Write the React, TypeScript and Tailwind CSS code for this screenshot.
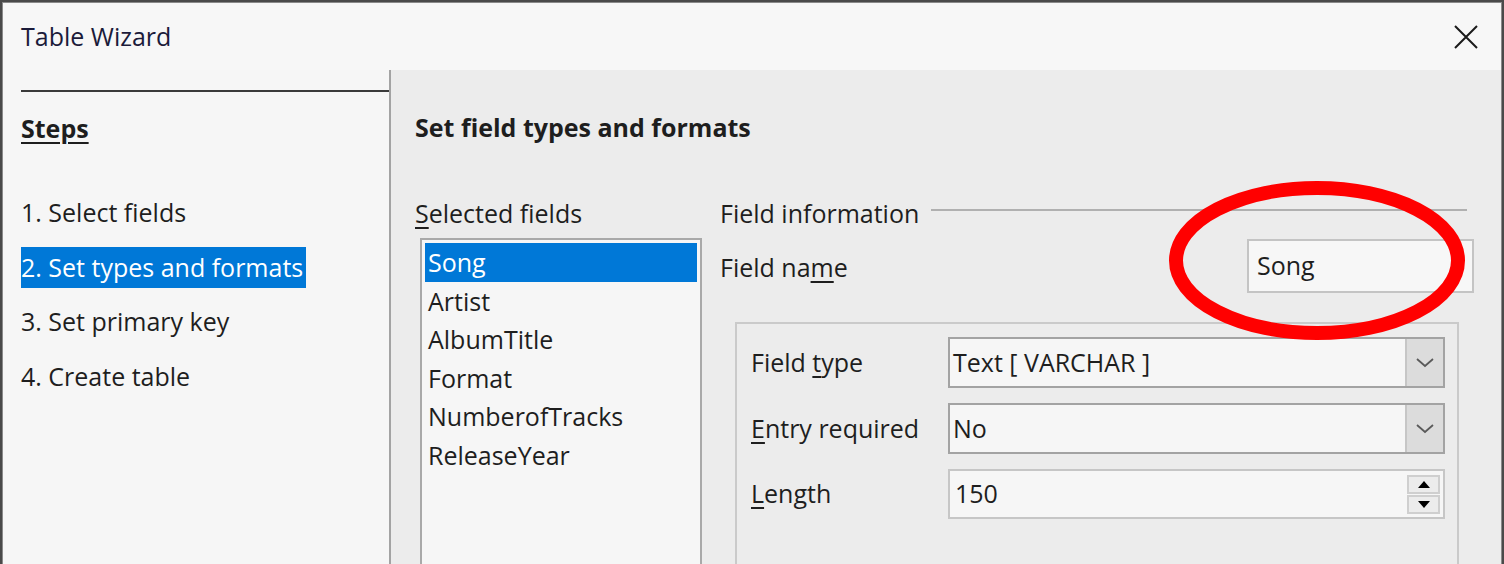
import React from "react";

const font = { fontFamily: '"Open Sans", "Noto Sans", sans-serif' };

function Chevron() {
  return (
    <svg width="18" height="10" viewBox="0 0 18 10">
      <path d="M1 1 L9 8 L17 1" fill="none" stroke="#5a5a5a" strokeWidth="1.8" />
    </svg>
  );
}

function ComboBox({ value }: { value: string }) {
  return (
    <div className="flex h-[51px] w-[497px] border-2 border-[#a3a3a3] bg-[#f6f6f6]">
      <div className="flex flex-1 items-center pl-[3px]">{value}</div>
      <div className="flex w-[38px] items-center justify-center border-l-2 border-[#c6c6c6] bg-[#dcdcdc]">
        <Chevron />
      </div>
    </div>
  );
}

function SpinBox({ value }: { value: string }) {
  return (
    <div className="flex h-[50px] w-[497px] border-2 border-[#c6c6c6] bg-[#f6f6f6]">
      <div className="flex flex-1 items-center pl-[5px]">{value}</div>
      <div className="flex flex-col justify-center gap-[1px] pr-[3px]">
        <div className="flex h-[19px] w-[33px] items-center justify-center border-2 border-[#cfcfcf] bg-[#ececec]">
          <svg width="12" height="7" viewBox="0 0 12 7">
            <path d="M0 7 L6 0 L12 7 Z" fill="#000" />
          </svg>
        </div>
        <div className="flex h-[19px] w-[33px] items-center justify-center border-2 border-[#cfcfcf] bg-[#ececec]">
          <svg width="12" height="7" viewBox="0 0 12 7">
            <path d="M0 0 L12 0 L6 7 Z" fill="#000" />
          </svg>
        </div>
      </div>
    </div>
  );
}

export default function App() {
  const steps = [
    "1. Select fields",
    "2. Set types and formats",
    "3. Set primary key",
    "4. Create table",
  ];
  const fields = ["Song", "Artist", "AlbumTitle", "Format", "NumberofTracks", "ReleaseYear"];

  return (
    <div
      className="relative h-[564px] w-[1504px] overflow-hidden bg-[#4a4a4a] pl-[2px] pt-[2px] text-[25px] text-[#1e1e1e]"
      style={font}
    >
      <div className="flex h-[600px] w-[1500px] flex-col border-x border-t border-[#8a8a8a] bg-[#f7f7f7]">
        {/* title bar */}
        <div className="flex h-[67px] shrink-0 items-center justify-between pl-[18px] pr-[23px]">
          <span className="text-[#1b1b3a]">Table Wizard</span>
          <svg width="24" height="24" viewBox="0 0 24 24">
            <path d="M1 1 L23 23 M23 1 L1 23" stroke="#1a1a1a" strokeWidth="2" />
          </svg>
        </div>

        <div className="flex flex-1">
          {/* steps panel */}
          <div className="flex w-[386px] flex-col bg-[#f6f6f6] pl-[18px]">
            <div className="mt-[20px] h-[2px] bg-[#3a3a3a]" />
            <div className="mt-[18px] h-[36px] font-bold leading-[36px]">
              <span className="underline decoration-2 underline-offset-4">Steps</span>
            </div>
            <div className="mt-[46px] flex flex-col gap-[13.6px]">
              {steps.map((s, i) => (
                <div key={s} className="h-[41px]">
                  <span
                    className={`inline-block h-[41px] leading-[41px] ${
                      i === 1 ? "bg-[#0078d7] pr-[3px] text-white" : ""
                    }`}
                  >
                    {s}
                  </span>
                </div>
              ))}
            </div>
          </div>

          <div className="w-[2px] bg-[#a3a3a3]" />

          {/* main panel */}
          <div className="flex flex-1 flex-col bg-[#ececec] pl-[24px] pt-[39px]">
            <div className="h-[36px] font-bold leading-[36px]">Set field types and formats</div>

            <div className="mt-[50px] flex">
              {/* selected fields */}
              <div className="flex w-[287px] flex-col">
                <div className="h-[36px] leading-[36px]">
                  <span className="underline underline-offset-4">S</span>elected fields
                </div>
                <div className="ml-[5px] mt-[7px] h-[400px] w-[282px] border-2 border-[#a9a9a9] bg-[#f6f6f6] p-[3px]">
                  {fields.map((f, i) => (
                    <div
                      key={f}
                      className={`h-[38.6px] pl-[3px] leading-[38px] ${
                        i === 0 ? "bg-[#0078d7] text-white" : ""
                      }`}
                    >
                      {f}
                    </div>
                  ))}
                </div>
              </div>

              {/* field information */}
              <div className="ml-[18px] flex w-[754px] flex-col">
                <div className="flex h-[36px] items-center">
                  <span className="leading-[36px]">Field information</span>
                  <div className="mb-[6px] ml-[12px] mr-[7px] h-[2px] flex-1 bg-[#b0b0b0]" />
                </div>
                <div className="mt-[8px] flex items-center">
                  <span className="pt-[3px]">
                    Field na<span className="underline underline-offset-4">m</span>e
                  </span>
                  <div className="ml-auto flex h-[54px] w-[227px] items-center border-2 border-[#c4c4c4] bg-[#f7f7f7] pl-[8px]">
                    Song
                  </div>
                </div>

                <div className="ml-[15px] mt-[29px] h-[300px] w-[724px] border-2 border-[#cacaca] pl-[14px] pt-[13px]">
                  <div className="flex flex-col gap-[15px]">
                    <div className="flex items-center">
                      <span className="w-[197px]">
                        Field <span className="underline underline-offset-4">t</span>ype
                      </span>
                      <ComboBox value="Text [ VARCHAR ]" />
                    </div>
                    <div className="flex items-center">
                      <span className="w-[197px]">
                        <span className="underline underline-offset-4">E</span>ntry required
                      </span>
                      <ComboBox value="No" />
                    </div>
                    <div className="flex items-center">
                      <span className="w-[197px]">
                        <span className="underline underline-offset-4">L</span>ength
                      </span>
                      <SpinBox value="150" />
                    </div>
                  </div>
                </div>
              </div>
            </div>
          </div>
        </div>
      </div>

      {/* red annotation ring */}
      <svg className="absolute left-[1168px] top-[181px]" width="298" height="159" viewBox="0 0 298 159">
        <ellipse cx="149" cy="79.5" rx="141" ry="72.5" fill="none" stroke="#ff0000" strokeWidth="14" />
      </svg>
    </div>
  );
}
